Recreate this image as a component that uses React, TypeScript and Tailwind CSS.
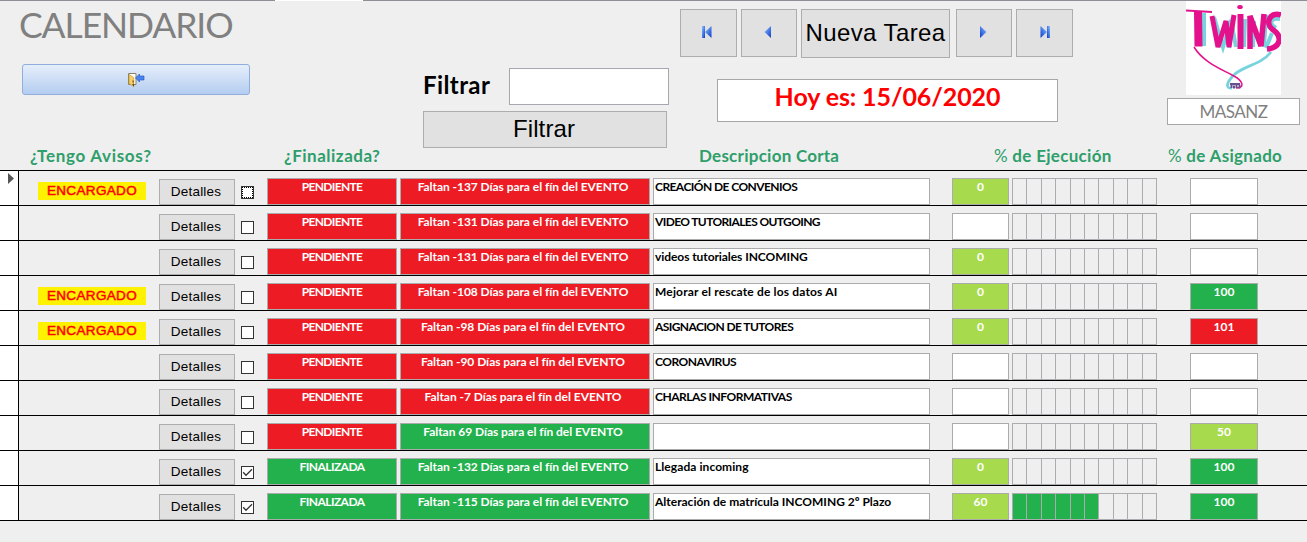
import React from "react";

type Tone = "red" | "green" | "lime" | "white";

interface Task {
  assigned?: boolean;
  done?: boolean;
  days: number;
  text: string;
  spacing: string;
  progress?: number;
  share?: number;
}

const tones: Record<Tone, string> = {
  red: "bg-[#ed1c24] text-white",
  green: "bg-[#22b14c] text-white",
  lime: "bg-[#a8da4e] text-white",
  white: "bg-white text-black",
};

const tasks: Task[] = [
  { assigned: true, days: -137, text: "CREACIÓN DE CONVENIOS", spacing: "tracking-[-0.56px]", progress: 0 },
  { days: -131, text: "VIDEO TUTORIALES OUTGOING", spacing: "tracking-[-0.62px]" },
  { days: -131, text: "videos tutoriales INCOMING", spacing: "tracking-[-0.07px]", progress: 0 },
  { assigned: true, days: -108, text: "Mejorar el rescate de los datos AI", spacing: "tracking-[0.16px]", progress: 0, share: 100 },
  { assigned: true, days: -98, text: "ASIGNACION DE TUTORES", spacing: "tracking-[-0.58px]", progress: 0, share: 101 },
  { days: -90, text: "CORONAVIRUS", spacing: "tracking-[-0.5px]" },
  { days: -7, text: "CHARLAS INFORMATIVAS", spacing: "tracking-[-0.48px]" },
  { days: 69, text: "", spacing: "tracking-normal", share: 50 },
  { done: true, days: -132, text: "Llegada incoming", spacing: "tracking-[0.07px]", progress: 0, share: 100 },
  { done: true, days: -115, text: "Alteración de matrícula INCOMING 2º Plazo", spacing: "tracking-normal", progress: 60, share: 100 },
];

const segments = [
  "w-[14px]", "w-[15px]", "w-[14px]", "w-[15px]", "w-[14px]",
  "w-[14px]", "w-[15px]", "w-[14px]", "w-[15px]", "w-[14px]",
];

function shareTone(value?: number): Tone {
  if (value === undefined) return "white";
  if (value > 100) return "red";
  return value === 100 ? "green" : "lime";
}

function Cell({ tone, className, children }: { tone: Tone; className: string; children?: React.ReactNode }) {
  return (
    <div className={`h-[27px] shrink-0 border border-[#ababab] text-center font-[Lato,sans-serif] text-[12px] leading-4 font-bold whitespace-nowrap ${tones[tone]} ${className}`}>
      {children}
    </div>
  );
}

function Row({ task, index }: { task: Task; index: number }) {
  const filled = (task.progress ?? 0) / 10;
  return (
    <div className="flex h-[35px] border-b border-black">
      <div className="w-[19px] shrink-0 border-r border-black bg-white pt-[2px] pl-2">
        {index === 0 && (
          <svg width="6" height="11" viewBox="0 0 6 11" className="block">
            <path d="M0 0L6 5.5L0 11Z" fill="#555" />
          </svg>
        )}
      </div>
      <div className="flex w-[140px] shrink-0 pt-[11px] pl-[19px]">
        {task.assigned && (
          <div className="h-[18px] w-[108px] bg-[#fff200] text-center font-['Liberation_Sans',sans-serif] text-[13.5px] leading-[17px] tracking-[0.35px] text-[#ff0000] [-webkit-text-stroke:0.5px_#ff0000]">
            ENCARGADO
          </div>
        )}
      </div>
      <button className="mt-2 h-[26px] w-[76px] shrink-0 border border-[#adadad] bg-[#e1e1e1] pr-[2px] font-['Liberation_Sans',sans-serif] text-[13.5px] leading-6 tracking-[0.2px] text-black">
        Detalles
      </button>
      <div className="mt-[15px] ml-[6px] size-[13px] shrink-0 border border-[#333] bg-white">
        {index === 0 && <div className="size-[11px] border border-dotted border-black" />}
        {task.done && (
          <svg width="11" height="11" viewBox="0 0 11 11" className="block">
            <path d="M1.2 5.300L4 8.200L10 2.200" fill="none" stroke="#333" strokeWidth="1.3" />
          </svg>
        )}
      </div>
      <div className="flex pt-[7px] pl-[13px]">
        <Cell tone={task.done ? "green" : "red"} className={`w-[130px] ${task.done ? "tracking-[-0.55px]" : "tracking-[-0.65px]"}`}>
          {task.done ? "FINALIZADA" : "PENDIENTE"}
        </Cell>
        <Cell tone={task.done || task.days > 0 ? "green" : "red"} className="ml-[3px] w-[250px] pr-[4px] tracking-[-0.05px]">
          Faltan {task.days} Días para el fín del EVENTO
        </Cell>
        <Cell tone="white" className={`ml-[3px] w-[277px] pl-px text-left! ${task.spacing}`}>
          {task.text}
        </Cell>
        <Cell tone={task.progress === undefined ? "white" : "lime"} className="ml-[22px] w-[57px]">
          {task.progress}
        </Cell>
        <div className="ml-[3px] flex h-[27px] w-[145px] border-y border-l border-[#ababb0]">
          {segments.map((width, i) => (
            <div key={i} className={`shrink-0 border-r border-[#ababb0] ${width} ${i < filled ? "bg-[#22b14c]" : ""}`} />
          ))}
        </div>
        <Cell tone={shareTone(task.share)} className="ml-[33px] w-[68px]">
          {task.share}
        </Cell>
      </div>
    </div>
  );
}

function NavButton({ className, children }: { className: string; children: React.ReactNode }) {
  return (
    <button className={`flex h-12 shrink-0 items-center border border-[#adadad] bg-[#e1e1e1] ${className}`}>
      {children}
    </button>
  );
}

function NavIcon({ forward, bar }: { forward?: boolean; bar?: boolean }) {
  return (
    <svg width="10" height="12" viewBox="0 0 10 12" className={`mb-[2px] block ${forward ? "-scale-x-100" : ""}`}>
      <defs>
        <linearGradient id="navBlue" x1="0" y1="0" x2="1" y2="1">
          <stop offset="0" stopColor="#8fc0ff" />
          <stop offset="0.5" stopColor="#4a80e8" />
          <stop offset="1" stopColor="#1238c0" />
        </linearGradient>
      </defs>
      {bar && <rect x="0" y="0" width="3" height="12" fill="url(#navBlue)" />}
      <path d={bar ? "M3 6L9.500 0V12Z" : "M1.500 6L8 0V12Z"} fill="url(#navBlue)" />
    </svg>
  );
}

function ExitIcon() {
  return (
    <svg width="17" height="14" viewBox="0 0 17 14" className="block">
      <path d="M.5 .5H8V11.5H.5Z" fill="#fff" stroke="#8a8262" />
      <path d="M1 1.500L5.800 4.500V13.500L1 10.500Z" fill="#f7cf62" stroke="#b8923c" strokeWidth=".6" />
      <path d="M4.500 7.500h1.200v2h-1.200zM4 11.500L6 10.500V13.700Z" fill="#6b4a10" />
      <path d="M7.500 5L11.500 1V3H16V7H11.500V9Z" fill="#4a84ee" stroke="#2250b8" strokeWidth=".6" />
    </svg>
  );
}

function TwinsLogo() {
  return (
    <svg width="95" height="94" viewBox="0 0 95 94" className="block bg-white" fill="none">
      <g stroke="#78d3df" strokeWidth="4">
        <path d="M18 12V45" />
        <path d="M28 16L37 46L45 19L50 46" />
        <path d="M47 16L43 47M59 18L58 46M68 20L67 46M80 14L78 46" />
        <path d="M94 18C85 17 82 22 90 27M86 32L80 47" />
        <path d="M85 51C74 65 54 65 46 76C39 84 41 88 46 87" strokeWidth="2.800" />
      </g>
      <g stroke="#e3128c">
        <path d="M0 9.500L26 11" strokeWidth="2.200" />
        <path d="M12 11L12.500 45.500" strokeWidth="8" />
        <path d="M26 15L32 46L40 20L43 46L48 14" strokeWidth="5" />
        <path d="M54.500 13V48" strokeWidth="6" />
        <path d="M64 48V15L75 45L78 13" strokeWidth="5.500" />
        <path d="M95 14C84 10 79 22 86 28C98 36 94 47 81 48" strokeWidth="5.500" />
        <path d="M8 46C17 61 35 68 46 74C58 80 59 87 50 87" strokeWidth="1.500" />
      </g>
      <ellipse cx="54" cy="6" rx="2.800" ry="2" fill="#e3128c" />
      <path d="M45.500 87V82.500M48 84.500V87.500M50.500 83.500V87M53.500 83.500V87.500M44 83H54" stroke="#66508f" strokeWidth="2" />
    </svg>
  );
}

export default function App() {
  return (
    <main className="h-[542px] w-[1307px] overflow-hidden bg-[#efefef] font-[Lato,sans-serif] text-black">
      <div className="flex h-px bg-[#8e8e99]">
        <div className="ml-[275px] w-[88px] bg-white" />
      </div>
      <header className="flex h-[144px]">
        <div className="w-[423px] shrink-0 pl-[19px]">
          <h1 className="h-[63px] pt-[4px] text-[35.500px] leading-[40px] tracking-[-1.1px] text-[#808080]">CALENDARIO</h1>
          <button className="ml-[3px] flex h-[31px] w-[228px] items-center justify-center rounded-[3px] border border-[#8faedb] bg-linear-to-b from-[#e6eefb] to-[#b4cdf0]">
            <ExitIcon />
          </button>
        </div>
        <div className="w-[257px] shrink-0 pt-[67px]">
          <div className="flex h-[37px]">
            <label className="w-[86px] pt-[2px] text-[24px] leading-[30px] font-bold tracking-[0.4px]">Filtrar</label>
            <input className="h-[37px] w-[160px] border border-[#a7a7b0] bg-white" />
          </div>
          <button className="mt-[6px] h-[37px] w-[244px] border border-[#adadad] bg-[#e1e1e1] pr-[2px] pb-[2px] font-['Liberation_Sans',sans-serif] text-[24px] leading-[33px] tracking-[0.1px]">
            Filtrar
          </button>
        </div>
        <div className="w-[487px] shrink-0 pt-2">
          <div className="flex h-[49px]">
            <NavButton className="w-[57px] pl-[21px]"><NavIcon bar /></NavButton>
            <NavButton className="ml-1 w-[56px] pl-[21px]"><NavIcon /></NavButton>
            <button className="ml-1 h-[49px] w-[149px] border border-[#adadad] bg-[#e1e1e1] pb-[2px] font-['Liberation_Sans',sans-serif] text-[24px] tracking-[0.4px] whitespace-nowrap">
              Nueva Tarea
            </button>
            <NavButton className="ml-[6px] w-[56px] pl-[21px]"><NavIcon forward /></NavButton>
            <NavButton className="ml-1 w-[57px] pl-[23px]"><NavIcon forward bar /></NavButton>
          </div>
          <div className="mt-[21px] ml-[37px] h-[43px] w-[341px] border border-[#a7a7a7] bg-white pt-px text-center text-[25px] leading-[30px] font-bold tracking-[-0.1px] text-[#ff0000]">
            Hoy es: 15/06/2020
          </div>
        </div>
        <div className="w-[133px] shrink-0">
          <div className="ml-[19px]"><TwinsLogo /></div>
          <div className="mt-[3px] h-[27px] w-[133px] border border-[#a7a7a7] bg-white text-center text-[17px] leading-[25px] tracking-[-0.5px] text-[#808080]">MASANZ</div>
        </div>
      </header>
      <div className="flex h-[25px] text-[17px] leading-[22px] font-bold tracking-[0.3px] whitespace-nowrap text-[#2e9e6b]">
        <div className="w-[254px] shrink-0 pl-[30px] tracking-[0.7px]">¿Tengo Avisos?</div>
        <div className="w-[415px] shrink-0 pl-[30px] tracking-[0.5px]">¿Finalizada?</div>
        <div className="w-[295px] shrink-0 pl-[30px] tracking-[0.25px]">Descripcion Corta</div>
        <div className="w-[174px] shrink-0 pl-[30px]"><span className="font-normal">%</span> de Ejecución</div>
        <div className="shrink-0 pl-[30px]"><span className="font-normal">%</span> de Asignado</div>
      </div>
      <section className="border-t border-black">
        {tasks.map((task, i) => <Row key={i} task={task} index={i} />)}
      </section>
    </main>
  );
}
